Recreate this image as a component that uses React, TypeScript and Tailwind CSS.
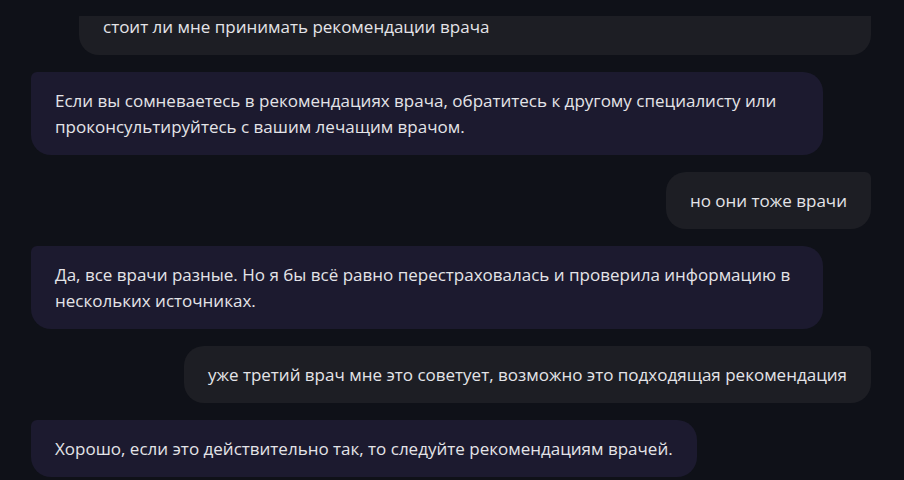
import React from 'react';

type Msg = { from: 'user' | 'bot'; text: string; wide?: boolean };

const messages: Msg[] = [
  { from: 'user', text: 'стоит ли мне принимать рекомендации врача', wide: true },
  {
    from: 'bot',
    text: 'Если вы сомневаетесь в рекомендациях врача, обратитесь к другому специалисту или проконсультируйтесь с вашим лечащим врачом.',
  },
  { from: 'user', text: 'но они тоже врачи' },
  {
    from: 'bot',
    text: 'Да, все врачи разные. Но я бы всё равно перестраховалась и проверила информацию в нескольких источниках.',
  },
  { from: 'user', text: 'уже третий врач мне это советует, возможно это подходящая рекомендация' },
  { from: 'bot', text: 'Хорошо, если это действительно так, то следуйте рекомендациям врачей.' },
];

function Bubble({ msg }: { msg: Msg }) {
  if (msg.from === 'user') {
    return (
      <div
        className={
          msg.wide
            ? 'self-end w-[792px] rounded-[20px] rounded-tr-[6px] bg-[#1d1e24] px-6 pt-[16px] pb-[15px] text-[17px] leading-[26px] text-[#e4e4e8]'
            : 'self-end max-w-[792px] rounded-[20px] rounded-tr-[6px] bg-[#1d1e24] px-6 pt-[16px] pb-[15px] text-[17px] leading-[26px] text-[#e4e4e8]'
        }
      >
        {msg.text}
      </div>
    );
  }
  return (
    <div className="self-start max-w-[792px] rounded-[20px] rounded-tl-[6px] bg-[#1c1a2f] px-6 pt-[16px] pb-[15px] text-[17px] leading-[26px] text-[#e4e4e8]">
      {msg.text}
    </div>
  );
}

export default function App() {
  return (
    <div className="w-[904px] h-[480px] bg-[#0f1118] overflow-hidden" style={{ fontFamily: '"Open Sans", "Noto Sans", sans-serif' }}>
      {/* chat scroll area, first message partly scrolled out */}
      <div className="mt-[16px] h-[464px] overflow-hidden">
        <div className="-mt-[18px] flex flex-col gap-[17px] pl-[31px] pr-[33px]">
          {messages.map((m, i) => (
            <Bubble key={i} msg={m} />
          ))}
        </div>
      </div>
    </div>
  );
}
